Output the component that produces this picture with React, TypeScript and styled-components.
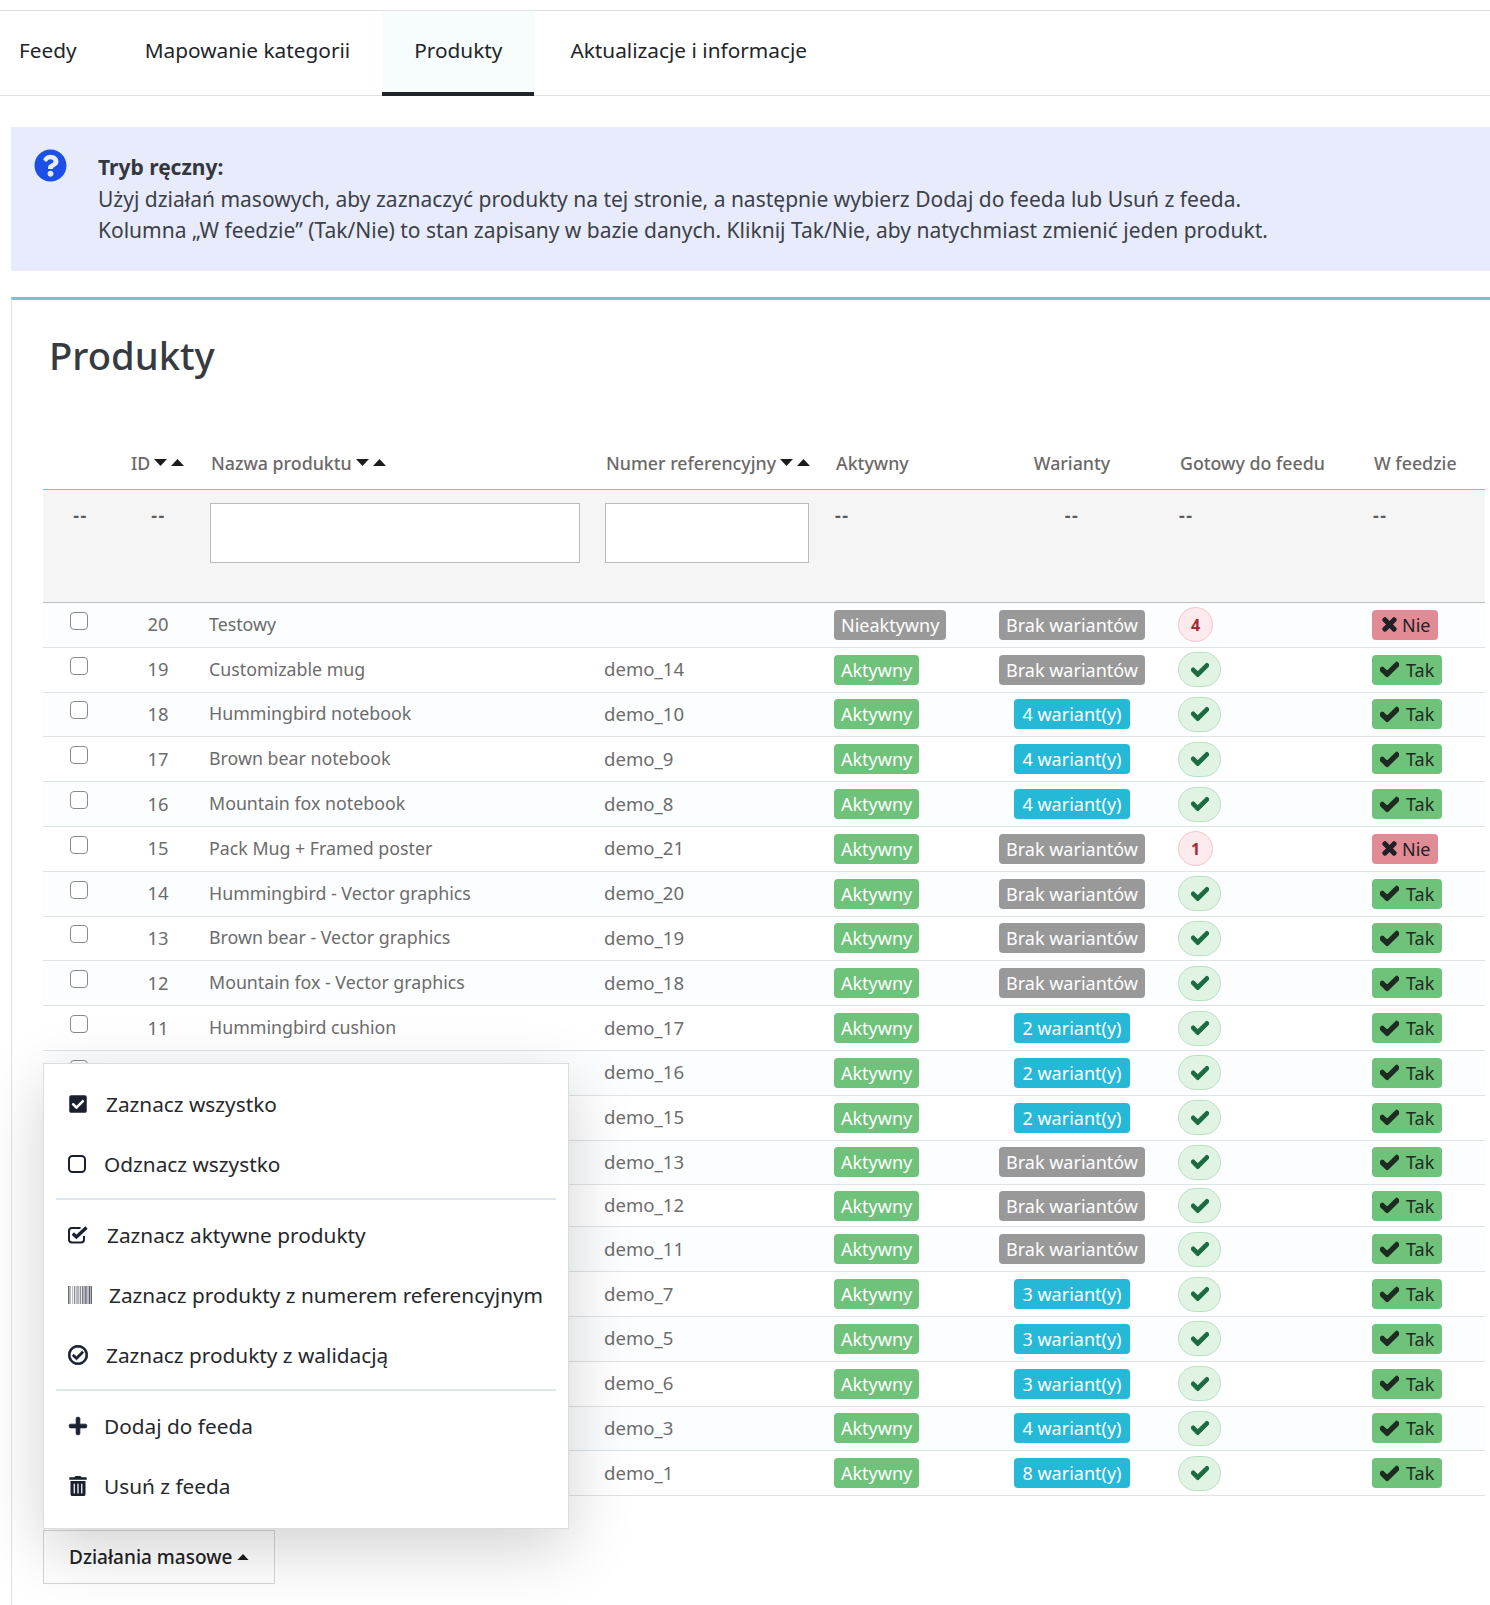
import React from "react";
import styled, { createGlobalStyle } from "styled-components";
import {
  FaQuestionCircle, FaCheck, FaTimes, FaCheckSquare,
  FaBarcode, FaRegCheckCircle, FaPlus, FaTrashAlt,
} from "react-icons/fa";

const Global = createGlobalStyle`
  html, body { margin: 0; padding: 0; background: #fff; overflow: hidden; }
  body { font-family: "Noto Sans", "Open Sans", sans-serif; font-size: 20px; color: #25282c; }
`;

const Page = styled.div`
  width: 1490px; height: 1605px; overflow: hidden; padding-top: 10px; box-sizing: border-box;
`;
const Tabs = styled.nav`
  display: flex; height: 86px; box-sizing: border-box;
  border-top: 1px solid #e2e2e2; border-bottom: 1px solid #e2e2e2;
`;
const Tab = styled.a<{ $active?: boolean }>`
  display: flex; align-items: center; height: 85px; box-sizing: border-box; padding: 0 32px 4px;
  font-size: 20.8px; color: #212529;
  background: ${(p) => (p.$active ? "#f7fcfc" : "transparent")};
  border-bottom: 4px solid ${(p) => (p.$active ? "#212529" : "transparent")};
  &:first-child { padding-left: 19px; padding-right: 36px; }
  &:last-child { padding-left: 36px; }
`;
const Alert = styled.div`
  display: flex; margin: 31px 0 26px 11px; height: 144px; box-sizing: border-box;
  background: #e8ebfb; padding: 22px 0 0 23px; color: #3b4148; font-size: 21px; line-height: 31.5px;
`;
const AlertIcon = styled.span`
  color: #1c4ee8; font-size: 33px; line-height: 33px; height: 33px; width: 64px; flex: none;
  svg { display: block; }
`;
const AlertBody = styled.div`
  padding-top: 3px; white-space: nowrap;
  b { font-weight: 700; color: #33383e; display: block; }
`;
const Card = styled.section`
  margin-left: 11px; width: 1500px; box-sizing: border-box; height: 1320px;
  border-top: 3px solid #7cc0cd; border-left: 1px solid #e2e2e2; padding: 0 0 0 31px;
`;
const Title = styled.h1`
  margin: 0; padding: 31px 0 0 6px; height: 151px; box-sizing: border-box;
  font-size: 38.2px; line-height: 48px; font-weight: 500; color: #363a41;
`;
const Table = styled.div`width: 1442px;`;
const cols = "72px 83px 395px 230px 154px 190px 194px 124px";
const HeadRow = styled.div`
  display: grid; grid-template-columns: ${cols}; height: 38px; align-items: start;
  border-bottom: 1px solid #7cc0cd; font-size: 17.8px; line-height: 24px; font-weight: 500; color: #6c6868;
`;
const HeadCell = styled.div<{ $center?: boolean; $pad?: number }>`
  display: flex; align-items: center; gap: 4px; white-space: nowrap;
  padding-left: ${(p) => (p.$center ? 0 : p.$pad ?? 14)}px;
  justify-content: ${(p) => (p.$center ? "center" : "flex-start")};
`;
const Sort = styled.span`display: inline-flex; gap: 4px; align-items: center;`;
const FilterRow = styled.div`
  display: grid; grid-template-columns: ${cols}; height: 113px; box-sizing: border-box;
  background: #f5f5f5; border-bottom: 1px solid #bbb; padding-top: 13px;
  font-weight: 700; color: #5c5c5c; font-size: 18px; line-height: 24px; letter-spacing: 1.5px;
  & > :nth-child(1) { padding-left: 3px; }
  & > :nth-child(2) { padding-left: 4px; }
`;
const FilterCell = styled.div<{ $center?: boolean }>`
  padding-left: ${(p) => (p.$center ? 0 : 12)}px;
  text-align: ${(p) => (p.$center ? "center" : "left")};
`;
const FilterInput = styled.input<{ $w: number }>`
  display: block; width: ${(p) => p.$w}px; height: 60px; box-sizing: border-box;
  background: #fff; border: 1px solid #bbb; outline: none;
`;
const Row = styled.div<{ $odd: boolean; $short?: boolean }>`
  display: grid; grid-template-columns: ${cols}; align-items: center; box-sizing: border-box;
  height: ${(p) => (p.$short ? 42 : 44.8)}px;
  background: ${(p) => (p.$odd ? "#fbfdfe" : "#fff")};
  border-bottom: 1px solid #dfe3e6; font-size: 17.8px; color: #6c6c6c;
  & > :nth-child(2) { padding-left: 3px; font-size: 18.4px; }
`;
const Cell = styled.div<{ $center?: boolean }>`
  padding-left: ${(p) => (p.$center ? 0 : 11)}px; white-space: nowrap;
  display: flex; align-items: center;
  justify-content: ${(p) => (p.$center ? "center" : "flex-start")};
`;
const TextCell = styled(Cell)`padding-bottom: 2px;`;
const RefCell = styled(TextCell)`font-size: 18.6px;`;
const Check = styled.input.attrs({ type: "checkbox" })`
  appearance: none; width: 18px; height: 18px; margin: -8px 0 0 0; box-sizing: border-box;
  border: 1.5px solid #8a8a8a; border-radius: 4px; background: #fff;
`;
const Badge = styled.span<{ $bg: string; $fg: string }>`
  display: inline-flex; align-items: center; height: 30px; box-sizing: border-box; padding: 0 7px;
  border-radius: 4px; background: ${(p) => p.$bg}; color: ${(p) => p.$fg}; font-size: 18px;
`;
const VariantBadge = styled(Badge)`padding: 0 8px;`;
const FeedBadge = styled(Badge)<{ $gap: number; $icon: number }>`
  padding: 0 8px; gap: ${(p) => p.$gap}px;
  svg { font-size: ${(p) => p.$icon}px; stroke: currentColor; stroke-width: 40px; }
`;
const Pill = styled.span<{ $ok: boolean }>`
  display: inline-flex; align-items: center; justify-content: center; box-sizing: border-box;
  width: ${(p) => (p.$ok ? 43 : 35)}px; height: 35px; border-radius: 18px;
  background: ${(p) => (p.$ok ? "#e1f4e3" : "#fdeaec")};
  border: 1px solid ${(p) => (p.$ok ? "#b9e0c3" : "#f5c6cb")};
  color: ${(p) => (p.$ok ? "#1c6b41" : "#a52834")}; font-size: 16px; font-weight: 700;
  svg { font-size: 18px; stroke: currentColor; stroke-width: 30px; }
`;
const Actions = styled.div`position: relative; margin-top: 34px; width: 232px;`;
const BulkButton = styled.button`
  display: flex; align-items: center; gap: 5px; width: 232px; height: 54px; box-sizing: border-box; padding: 0 0 0 25px;
  background: transparent; border: 1px solid #d5d5d5; font: inherit; font-size: 19px; font-weight: 500; color: #1e2226;
`;
const Menu = styled.div`
  position: absolute; left: 0; bottom: 55px; width: 526px; height: 466px; box-sizing: border-box;
  background: #fff; border: 1px solid #dcdcdc; padding: 10px 12px 0;
  box-shadow: 0 20px 60px rgba(0, 0, 0, 0.175);
`;
const MenuItem = styled.div<{ $gap: number }>`
  display: flex; align-items: center; height: 60px; padding-left: 12px; gap: ${(p) => p.$gap}px;
  font-size: 20.8px; color: #25282c; white-space: nowrap;
  svg { font-size: 20px; flex: none; color: #1a2030; }
`;
const BoldIcon = styled.span`
  display: flex; flex: none;
  svg { stroke: currentColor; stroke-width: 20px; }
`;
const BarIcon = styled.span`
  display: flex; flex: none;
  svg { font-size: 24px; color: #4c4f58; }
`;
const Divider = styled.div`height: 2px; background: #dfe7ee; margin: 4px 0 5px;`;

function Tri({ up, w = 13 }: { up?: boolean; w?: number }) {
  return (
    <svg width={w} height={w * 0.54} viewBox="0 0 13 7">
      <path d={up ? "M0 7 6.5 0 13 7Z" : "M0 0H13L6.5 7Z"} fill="#1c1c1c" />
    </svg>
  );
}
const Arrows = () => <Sort><Tri /><Tri up /></Sort>;

function SquareCheck() {
  return (
    <svg width="21" height="20" viewBox="0 0 21 20" fill="none">
      <path d="M16 11v3.5a3 3 0 0 1-3 3H4a3 3 0 0 1-3-3V6a3 3 0 0 1 3-3h8.5" stroke="currentColor" strokeWidth="2" />
      <path d="M4.8 8.5 8.4 12 18.5 2.4" stroke="currentColor" strokeWidth="3.4" />
    </svg>
  );
}
function SquareEmpty() {
  return (
    <svg width="18" height="18" viewBox="0 0 18 18" fill="none">
      <rect x="1" y="1" width="16" height="16" rx="3.5" stroke="currentColor" strokeWidth="2" />
    </svg>
  );
}

type P = [string, string, string, number, number];
// id, name, ref, variants, missing; the rows behind the menu keep only what stays visible
const products: P[] = [
  ["20", "Testowy", "", 0, 4],
  ["19", "Customizable mug", "demo_14", 0, 0],
  ["18", "Hummingbird notebook", "demo_10", 4, 0],
  ["17", "Brown bear notebook", "demo_9", 4, 0],
  ["16", "Mountain fox notebook", "demo_8", 4, 0],
  ["15", "Pack Mug + Framed poster", "demo_21", 0, 1],
  ["14", "Hummingbird - Vector graphics", "demo_20", 0, 0],
  ["13", "Brown bear - Vector graphics", "demo_19", 0, 0],
  ["12", "Mountain fox - Vector graphics", "demo_18", 0, 0],
  ["11", "Hummingbird cushion", "demo_17", 2, 0],
  ["", "", "demo_16", 2, 0],
  ["", "", "demo_15", 2, 0],
  ["", "", "demo_13", 0, 0],
  ["", "", "demo_12", 0, 0],
  ["", "", "demo_11", 0, 0],
  ["", "", "demo_7", 3, 0],
  ["", "", "demo_5", 3, 0],
  ["", "", "demo_6", 3, 0],
  ["", "", "demo_3", 4, 0],
  ["", "", "demo_1", 8, 0],
];

export default function App() {
  return (
    <Page>
      <Global />
      <Tabs>
        <Tab>Feedy</Tab>
        <Tab>Mapowanie kategorii</Tab>
        <Tab $active>Produkty</Tab>
        <Tab>Aktualizacje i informacje</Tab>
      </Tabs>
      <Alert>
        <AlertIcon><FaQuestionCircle /></AlertIcon>
        <AlertBody>
          <b>Tryb ręczny:</b>
          Użyj działań masowych, aby zaznaczyć produkty na tej stronie, a następnie wybierz Dodaj do feeda lub Usuń z feeda.
          <br />
          Kolumna „W feedzie” (Tak/Nie) to stan zapisany w bazie danych. Kliknij Tak/Nie, aby natychmiast zmienić jeden produkt.
        </AlertBody>
      </Alert>
      <Card>
        <Title>Produkty</Title>
        <Table>
          <HeadRow>
            <HeadCell />
            <HeadCell $pad={16}>ID <Arrows /></HeadCell>
            <HeadCell $pad={13}>Nazwa produktu <Arrows /></HeadCell>
            <HeadCell $pad={13}>Numer referencyjny <Arrows /></HeadCell>
            <HeadCell $pad={13}>Aktywny</HeadCell>
            <HeadCell $center>Warianty</HeadCell>
            <HeadCell $pad={13}>Gotowy do feedu</HeadCell>
            <HeadCell $pad={13}>W feedzie</HeadCell>
          </HeadRow>
          <FilterRow>
            <FilterCell $center>--</FilterCell>
            <FilterCell $center>--</FilterCell>
            <FilterCell><FilterInput $w={370} /></FilterCell>
            <FilterCell><FilterInput $w={204} /></FilterCell>
            <FilterCell>--</FilterCell>
            <FilterCell $center>--</FilterCell>
            <FilterCell>--</FilterCell>
            <FilterCell>--</FilterCell>
          </FilterRow>
          {products.map(([id, name, ref, variants, missing], i) => (
            <Row key={i} $odd={i % 2 === 0} $short={i === 13}>
              <Cell $center><Check /></Cell>
              <TextCell $center>{id}</TextCell>
              <TextCell>{name}</TextCell>
              <RefCell>{ref}</RefCell>
              <Cell>
                {i === 0 ? <Badge $bg="#999" $fg="#fff">Nieaktywny</Badge> : <Badge $bg="#6fc27a" $fg="#fff">Aktywny</Badge>}
              </Cell>
              <Cell $center>
                {variants === 0
                  ? <Badge $bg="#999" $fg="#fff">Brak wariantów</Badge>
                  : <VariantBadge $bg="#25b9d7" $fg="#fff">{variants} wariant(y)</VariantBadge>}
              </Cell>
              <Cell><Pill $ok={missing === 0}>{missing === 0 ? <FaCheck /> : missing}</Pill></Cell>
              <Cell>
                {missing === 0
                  ? <FeedBadge $gap={7} $icon={19} $bg="#6fc27a" $fg="#1e2b22"><FaCheck />Tak</FeedBadge>
                  : <FeedBadge $gap={3} $icon={19} $bg="#e08b95" $fg="#1e2226"><FaTimes />Nie</FeedBadge>}
              </Cell>
            </Row>
          ))}
        </Table>
        <Actions>
          <Menu>
            <MenuItem $gap={18}><FaCheckSquare />Zaznacz wszystko</MenuItem>
            <MenuItem $gap={18}><SquareEmpty />Odznacz wszystko</MenuItem>
            <Divider />
            <MenuItem $gap={18}><SquareCheck />Zaznacz aktywne produkty</MenuItem>
            <MenuItem $gap={17}><BarIcon><FaBarcode /></BarIcon>Zaznacz produkty z numerem referencyjnym</MenuItem>
            <MenuItem $gap={18}><BoldIcon><FaRegCheckCircle /></BoldIcon>Zaznacz produkty z walidacją</MenuItem>
            <Divider />
            <MenuItem $gap={16}><BoldIcon><FaPlus /></BoldIcon>Dodaj do feeda</MenuItem>
            <MenuItem $gap={16}><FaTrashAlt />Usuń z feeda</MenuItem>
          </Menu>
          <BulkButton>Działania masowe <Tri up w={12} /></BulkButton>
        </Actions>
      </Card>
    </Page>
  );
}
